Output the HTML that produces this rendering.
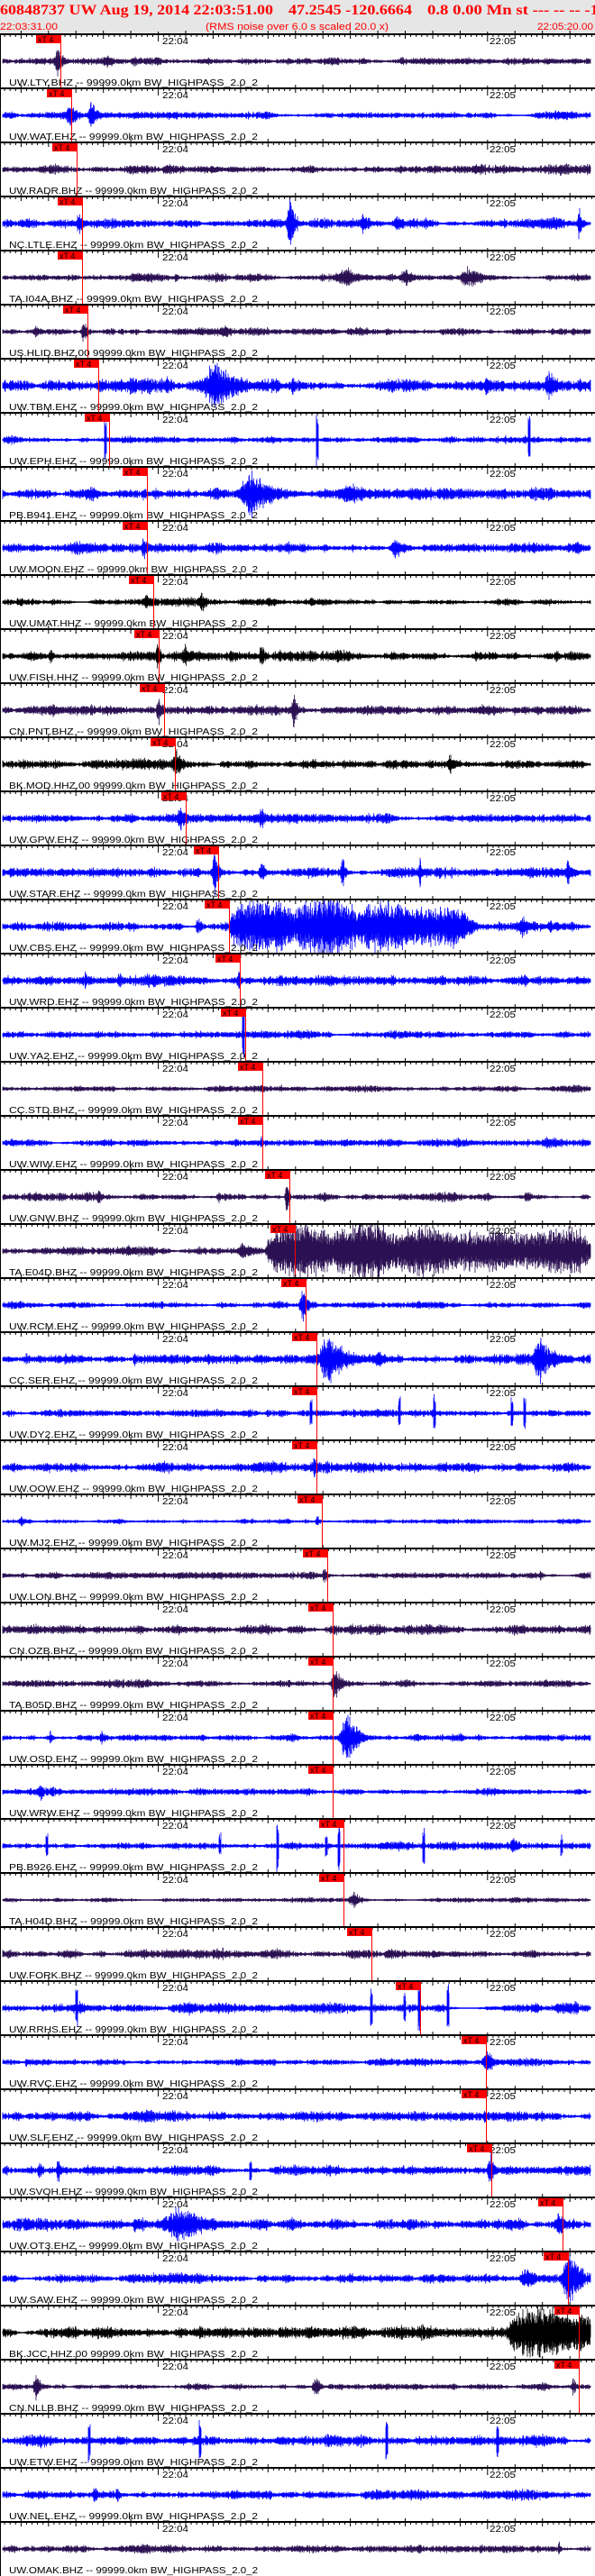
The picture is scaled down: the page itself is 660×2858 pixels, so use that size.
<!DOCTYPE html>
<html><head><meta charset="utf-8">
<style>
html,body{margin:0;padding:0;background:#fff;}
body{width:660px;height:2858px;overflow:hidden;}
svg{display:block;}
</style></head>
<body>
<svg id="s" xmlns="http://www.w3.org/2000/svg" width="660" height="2858" viewBox="0 0 660 2858">
<rect x="0" y="0" width="660" height="38" fill="#e6e6e6"/>
<text x="0" y="16" fill="#ff0000" font-family="Liberation Serif, serif" font-weight="bold" font-size="16" textLength="303" lengthAdjust="spacingAndGlyphs">60848737 UW Aug 19, 2014 22:03:51.00</text>
<text x="320" y="16" fill="#ff0000" font-family="Liberation Serif, serif" font-weight="bold" font-size="16" textLength="137" lengthAdjust="spacingAndGlyphs">47.2545 -120.6664</text>
<text x="474" y="16" fill="#ff0000" font-family="Liberation Serif, serif" font-weight="bold" font-size="16" textLength="190" lengthAdjust="spacingAndGlyphs">0.8 0.00 Mn st --- -- --  -1</text>
<text x="0" y="33" fill="#ff0000" font-family="Liberation Sans, sans-serif" font-size="11" textLength="64" lengthAdjust="spacingAndGlyphs">22:03:31.00</text>
<text x="228" y="33" fill="#ff0000" font-family="Liberation Sans, sans-serif" font-size="11" textLength="203" lengthAdjust="spacingAndGlyphs">(RMS noise over 6.0 s scaled 20.0 x)</text>
<text x="596" y="33" fill="#ff0000" font-family="Liberation Sans, sans-serif" font-size="11" textLength="62" lengthAdjust="spacingAndGlyphs">22:05:20.00</text>
<line x1="0.5" y1="38" x2="0.5" y2="2858" stroke="#000" stroke-width="1"/>
<g id="g"></g>
</svg>
<script>
(function(){
var P="#2b1153",B="#0000ff",K="#000000";
var T=[
["UW.LTY.BHZ --  99999.0km BW_HIGHPASS_2.0_2",P,3,[[64,17,6],[120,8,12],[150,6,8],[320,5,6]],67],
["UW.WAT.EHZ --  99999.0km BW_HIGHPASS_2.0_2",B,3,[[78,16,8],[102,20,6]],79],
["UW.RADR.BHZ --  99999.0km BW_HIGHPASS_2.0_2",P,4,[],85],
["NC.LTLE.EHZ --  99999.0km BW_HIGHPASS_2.0_2",B,4,[[88,14,6],[322,30,6],[403,14,5],[440,12,5],[643,22,3]],91],
["TA.I04A.BHZ --  99999.0km BW_HIGHPASS_2.0_2",P,3,[[385,12,18],[450,10,12],[520,12,18],[195,6,4]],91],
["US.HLID.BHZ.00 99999.0km BW_HIGHPASS_2.0_2",P,3,[[40,7,8],[93,14,5],[246,6,5],[370,5,6],[430,5,6]],97],
["UW.TBM.EHZ --  99999.0km BW_HIGHPASS_2.0_2",B,5,[[240,28,25],[110,8,8],[610,18,10],[540,12,6],[325,12,4]],109],
["UW.EPH.EHZ --  99999.0km BW_HIGHPASS_2.0_2",B,3,[[117,25,1,1],[352,30,1,1],[587,30,1,1]],121],
["PB.B941.EHZ --  99999.0km BW_HIGHPASS_2.0_2",B,5,[[280,25,25],[390,14,25],[160,8,5]],163],
["UW.MOON.EHZ --  99999.0km BW_HIGHPASS_2.0_2",B,4,[[160,14,5],[440,12,12],[640,10,8],[320,8,10]],163],
["UW.UMAT.HHZ --  99999.0km BW_HIGHPASS_2.0_2",K,3,[[162,10,8],[224,12,7],[345,6,5]],170],
["UW.FISH.HHZ --  99999.0km BW_HIGHPASS_2.0_2",K,4,[[56,12,3],[175,20,3],[205,16,4],[290,20,3],[617,10,3],[550,5,6]],176],
["CN.PNT.BHZ --  99999.0km BW_HIGHPASS_2.0_2",P,4,[[176,20,4],[326,20,4],[60,8,15],[230,6,10]],182],
["BK.MOD.HHZ.00 99999.0km BW_HIGHPASS_2.0_2",K,4,[[195,18,8],[500,12,6]],194],
["UW.GPW.EHZ --  99999.0km BW_HIGHPASS_2.0_2",B,4,[[200,18,8],[290,14,4]],206],
["UW.STAR.EHZ --  99999.0km BW_HIGHPASS_2.0_2",B,4,[[238,28,4],[290,14,5],[380,20,3],[466,16,2],[630,16,5],[350,8,4]],242],
["UW.CBS.EHZ --  99999.0km BW_HIGHPASS_2.0_2",B,4,[[254,30,0,2,525],[220,12,5],[580,14,8]],254],
["UW.WRD.EHZ --  99999.0km BW_HIGHPASS_2.0_2",B,4,[[95,12,2],[133,10,6],[265,12,4]],266],
["UW.YA2.EHZ --  99999.0km BW_HIGHPASS_2.0_2",B,3,[[270,30,1.5,1]],272],
["CC.STD.BHZ --  99999.0km BW_HIGHPASS_2.0_2",P,2.5,[[290,6,3],[312,6,4]],291],
["UW.WIW.EHZ --  99999.0km BW_HIGHPASS_2.0_2",B,3,[[290,8,2]],291],
["UW.GNW.BHZ --  99999.0km BW_HIGHPASS_2.0_2",P,3,[[318,22,2],[110,8,5],[243,8,4],[360,7,5],[585,8,5],[40,6,5]],321],
["TA.E04D.BHZ --  99999.0km BW_HIGHPASS_2.0_2",P,4,[[295,30,0,2,660],[270,10,15]],327],
["UW.RCM.EHZ --  99999.0km BW_HIGHPASS_2.0_2",B,3,[[337,18,8]],339],
["CC.SER.EHZ --  99999.0km BW_HIGHPASS_2.0_2",B,4,[[365,30,20],[600,26,15],[420,10,10],[150,8,5]],351],
["UW.DY2.EHZ --  99999.0km BW_HIGHPASS_2.0_2",B,3,[[345,16,1,1],[443,18,1,1],[482,20,1,1],[568,18,1,1],[582,20,1,1]],351],
["UW.OOW.EHZ --  99999.0km BW_HIGHPASS_2.0_2",B,4,[[349,16,3]],351],
["UW.MJ2.EHZ --  99999.0km BW_HIGHPASS_2.0_2",B,2,[[352,8,3],[24,7,5],[280,4,4]],357],
["UW.LON.BHZ --  99999.0km BW_HIGHPASS_2.0_2",P,3,[[360,10,4],[600,8,3]],363],
["CN.OZB.BHZ --  99999.0km BW_HIGHPASS_2.0_2",P,4,[],369],
["TA.B05D.BHZ --  99999.0km BW_HIGHPASS_2.0_2",P,3,[[372,18,8]],369],
["UW.OSD.EHZ --  99999.0km BW_HIGHPASS_2.0_2",B,3,[[385,30,12],[113,10,4],[56,8,3]],369],
["UW.WRW.EHZ --  99999.0km BW_HIGHPASS_2.0_2",B,3,[[45,10,5]],369],
["PB.B926.EHZ --  99999.0km BW_HIGHPASS_2.0_2",B,3,[[52,14,1,1],[244,14,1,1],[308,30,1,1],[362,14,1,1],[376,28,1,1],[470,24,1,1],[570,10,8],[623,12,1,1]],381],
["TA.H04D.BHZ --  99999.0km BW_HIGHPASS_2.0_2",P,2,[[392,11,8]],381],
["UW.FORK.BHZ --  99999.0km BW_HIGHPASS_2.0_2",P,4,[],412],
["UW.RRHS.EHZ --  99999.0km BW_HIGHPASS_2.0_2",B,4,[[85,22,1,1],[412,24,1,1],[449,18,1,1],[465,26,1,1],[497,30,1,1],[90,8,10],[210,8,10]],466],
["UW.RVC.EHZ --  99999.0km BW_HIGHPASS_2.0_2",B,3,[[540,16,8],[30,7,5]],539],
["UW.SLF.EHZ --  99999.0km BW_HIGHPASS_2.0_2",B,4,[[406,6,3],[538,8,4]],539],
["UW.SVOH.EHZ --  99999.0km BW_HIGHPASS_2.0_2",B,4,[[44,12,4],[65,15,4],[278,14,1,1],[544,20,5]],545],
["UW.OT3.EHZ --  99999.0km BW_HIGHPASS_2.0_2",B,5,[[200,20,35],[620,14,10],[150,10,5]],624],
["UW.SAW.EHZ --  99999.0km BW_HIGHPASS_2.0_2",B,4,[[585,12,15],[632,30,14]],630],
["BK.JCC.HHZ.00 99999.0km BW_HIGHPASS_2.0_2",K,5,[[563,28,0,2,660],[600,10,10]],642],
["CN.NLLB.BHZ --  99999.0km BW_HIGHPASS_2.0_2",P,3,[[40,16,5],[350,14,5],[636,12,3]],642],
["UW.ETW.EHZ --  99999.0km BW_HIGHPASS_2.0_2",B,4,[[99,25,1,1],[222,22,1,1],[429,24,1,1],[552,22,1,1]],0],
["UW.NEL.EHZ --  99999.0km BW_HIGHPASS_2.0_2",B,4,[[105,12,3],[130,12,2]],0],
["UW.OMAK.BHZ --  99999.0km BW_HIGHPASS_2.0_2",P,3,[[465,8,3],[620,10,2]],0]
];
var seed=12345;function r(){seed=(seed*1103515245+12345)%2147483648;return seed/2147483648;}
var ns="http://www.w3.org/2000/svg",g=document.getElementById("g");
function el(n,a,t){var e=document.createElementNS(ns,n);for(var k in a)e.setAttribute(k,a[k]);if(t!=null)e.textContent=t;g.appendChild(e);return e;}
var px=6.088;
for(var i=0;i<T.length;i++){
 var tr=T[i],top=38+60*i,cy=top+30;
 var d="",nz=tr[2]*1.15,ev=tr[3];
 var slow=0;
 for(var x=3;x<=655;x+=0.5){
  slow=slow*0.97+(r()-0.5)*0.12;
  var a=nz*(0.35+0.65*r())*(1+slow*2);
  for(var j=0;j<ev.length;j++){var e=ev[j];
   if(e[3]==1){ if(Math.abs(x-e[0])<=1) a=Math.max(a,e[1]*(0.7+0.3*r())); }
   else if(e[3]==2){ if(x>=e[0]&&x<=e[4]){
      var m=0.55+0.45*Math.abs(Math.sin((x-e[0])/23))*(0.6+0.4*Math.sin((x-e[0])/57));
      var ramp=Math.min(1,(x-e[0])/8+0.3, (e[4]-x)/25+0.35);
      a=Math.max(a,e[1]*ramp*m*(0.5+0.7*r())); } }
   else { var dd=x-e[0]; var env=dd<0?Math.exp(-dd*dd/(0.3*e[2]*e[2]+1)):Math.exp(-dd/(e[2]+0.5)); a=Math.max(a,e[1]*env*(0.4+0.6*r())); }
  }
  var up=a*(0.6+0.5*r()),dn=a*(0.6+0.5*r());
  if(up>29)up=29;if(dn>29)dn=29;
  d+="M"+x+" "+(cy-up).toFixed(1)+"V"+(cy+dn).toFixed(1);
 }
 el("path",{d:d,stroke:tr[1],"stroke-width":"0.8",fill:"none"});
 el("line",{x1:3,y1:cy,x2:655,y2:cy,stroke:tr[1],"stroke-width":"1.4"});
 el("rect",{x:0,y:top-1,width:660,height:2,fill:"#000"});
 var tk="";
 for(var s=0;s<=109;s++){
  var xx=(s*px-1).toFixed(1);
  if(s==29||s==89) tk+="M"+xx+" "+(top-3)+"V"+(top+8);
  else if(s%5==4) tk+="M"+xx+" "+(top-4)+"V"+(top+5);
  else tk+="M"+xx+" "+top+"V"+(top+3);
 }
 el("path",{d:tk,stroke:"#000","stroke-width":"1",fill:"none"});
 el("text",{x:180,y:top+11,"font-family":"Liberation Sans, sans-serif","font-size":"10",fill:"#000",textLength:"29",lengthAdjust:"spacingAndGlyphs"},"22:04");
 el("text",{x:543,y:top+11,"font-family":"Liberation Sans, sans-serif","font-size":"10",fill:"#000",textLength:"29",lengthAdjust:"spacingAndGlyphs"},"22:05");
 el("text",{x:10,y:top+57,"font-family":"Liberation Sans, sans-serif","font-size":"10.5",fill:"#000",textLength:"276",lengthAdjust:"spacingAndGlyphs"},tr[0]);
 if(tr[4]){var mx=tr[4];
  el("rect",{x:mx-27,y:top+1,width:27,height:9,fill:"#ff0000"});
  el("text",{x:mx-25,y:top+9,"font-family":"Liberation Sans, sans-serif","font-size":"9",fill:"#000"},"xT 4");
  el("line",{x1:mx+0.5,y1:top+1,x2:mx+0.5,y2:top+60,stroke:"#ff0000","stroke-width":"1"});
 }
}
})();
</script>
</body></html>
